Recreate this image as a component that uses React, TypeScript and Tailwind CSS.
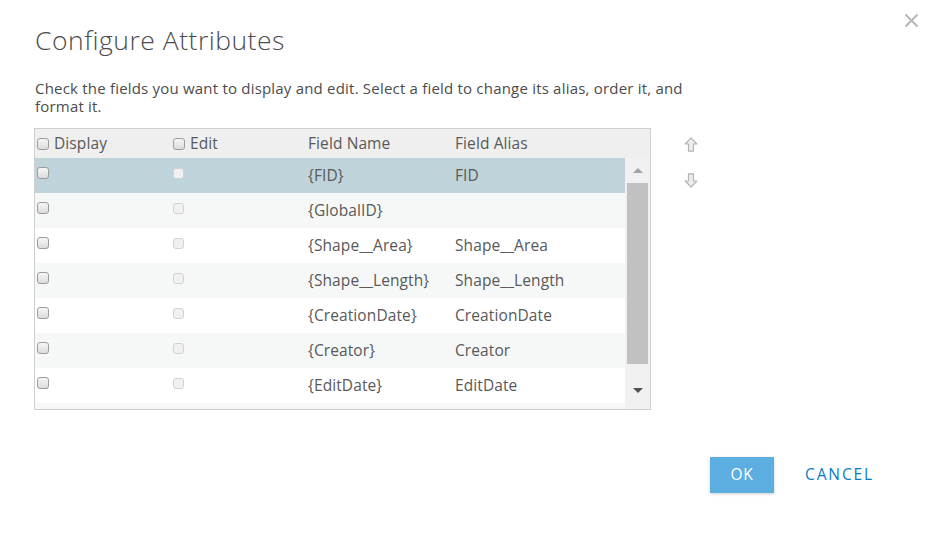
// Configure Attributes dialog: field list with display/edit toggles,
// reorder arrows and OK / CANCEL actions.

const FONT = { fontFamily: '"Open Sans", Lato, sans-serif' };

interface Field {
  name: string;
  alias: string;
}

const FIELDS: Field[] = [
  { name: '{FID}', alias: 'FID' },
  { name: '{GlobalID}', alias: '' },
  { name: '{Shape__Area}', alias: 'Shape__Area' },
  { name: '{Shape__Length}', alias: 'Shape__Length' },
  { name: '{CreationDate}', alias: 'CreationDate' },
  { name: '{Creator}', alias: 'Creator' },
  { name: '{EditDate}', alias: 'EditDate' },
];

function Checkbox({ disabled = false }: { disabled?: boolean }) {
  return disabled ? (
    <span className="inline-block h-[11px] w-[11px] shrink-0 rounded-[3px] border border-[#d2d2d2] bg-[#f1f1f1]" />
  ) : (
    <span className="inline-block h-[12px] w-[12px] shrink-0 rounded-[3px] border border-[#9c9c9c] bg-gradient-to-b from-[#f6f6f6] to-[#dcdcdc]" />
  );
}

function MoveArrow({ down = false }: { down?: boolean }) {
  return (
    <svg width="14" height="15" viewBox="0 0 14 15" className={down ? 'rotate-180' : ''}>
      <polygon
        points="7,0.8 12.8,7 9.5,7 9.5,14.2 4.5,14.2 4.5,7 1.2,7"
        fill="#ececec"
        stroke="#b4b4b4"
        strokeWidth="1.2"
        strokeLinejoin="round"
      />
    </svg>
  );
}

function Scrollbar() {
  return (
    <div className="flex w-[25px] shrink-0 flex-col items-center bg-[#f1f1f1]">
      <div className="flex h-[25px] items-center justify-center">
        <span className="h-0 w-0 border-x-[5px] border-b-[5px] border-x-transparent border-b-[#a3a3a3]" />
      </div>
      <div className="h-[181px] w-[21px] bg-[#c1c1c1]" />
      <div className="flex flex-1 items-center justify-center pt-[8px]">
        <span className="h-0 w-0 border-x-[5px] border-t-[5px] border-x-transparent border-t-[#505050]" />
      </div>
    </div>
  );
}

function FieldTable() {
  return (
    <div className="w-[617px] border border-[#cfcfcf] text-[15.5px] tracking-[0.1px] text-[#595959]">
      <div className="grid h-[29px] grid-cols-[136px_135px_147px_1fr] items-center bg-[#efefef] pl-[2px]">
        <div className="flex items-center gap-[5px]">
          <Checkbox />
          <span>Display</span>
        </div>
        <div className="flex items-center gap-[5px]">
          <Checkbox />
          <span>Edit</span>
        </div>
        <span>Field Name</span>
        <span>Field Alias</span>
      </div>
      <div className="flex h-[251px]">
        <div className="flex-1 overflow-hidden">
          {FIELDS.map((f, i) => (
            <div
              key={f.name}
              className={`grid h-[35px] grid-cols-[136px_135px_147px_1fr] items-center pl-[2px] ${
                i === 0 ? 'bg-[#bfd4da]' : i % 2 === 1 ? 'bg-[#f6f8f8]' : 'bg-white'
              }`}
            >
              <div className="mb-[4px]">
                <Checkbox />
              </div>
              <div className="mb-[4px]">
                <Checkbox disabled />
              </div>
              <span>{f.name}</span>
              <span>{f.alias}</span>
            </div>
          ))}
          <div className="h-[35px] bg-[#f6f8f8]" />
        </div>
        <Scrollbar />
      </div>
    </div>
  );
}

export default function App() {
  return (
    <div style={FONT} className="relative h-[536px] w-[931px] overflow-hidden bg-white text-[#4c4c4c]">
      <button className="absolute right-[12px] top-[13px]" aria-label="Close">
        <svg width="15" height="15" viewBox="0 0 15 15">
          <path d="M1.5 1.5 L13.5 13.5 M13.5 1.5 L1.5 13.5" stroke="#b8b8b8" strokeWidth="2" />
        </svg>
      </button>

      <div className="pl-[34px] pt-[24px]">
        <h1 className="pl-[1px] text-[26.5px] font-light leading-[32px] tracking-[0.5px] text-[#4c4c4c]">
          Configure Attributes
        </h1>
        <p className="mt-[23px] w-[690px] pl-[1px] text-[15px] leading-[18px] tracking-[0.2px] text-[#4c4c4c]">
          Check the fields you want to display and edit. Select a field to change its alias, order it, and
          format it.
        </p>

        <div className="mt-[13px] flex gap-[33px]">
          <FieldTable />
          <div className="flex flex-col gap-[21px] pt-[9px]">
            <MoveArrow />
            <MoveArrow down />
          </div>
        </div>

        <div className="mt-[47px] flex items-center pl-[676px]">
          <button className="h-[36px] w-[64px] bg-[#5cade0] text-[15.5px] font-medium tracking-[0.8px] text-white shadow-[0_1px_3px_rgba(0,0,0,0.2)]">
            OK
          </button>
          <button className="ml-[31px] text-[15.5px] font-medium tracking-[1.9px] text-[#0a7bc2]">
            CANCEL
          </button>
        </div>
      </div>
    </div>
  );
}
